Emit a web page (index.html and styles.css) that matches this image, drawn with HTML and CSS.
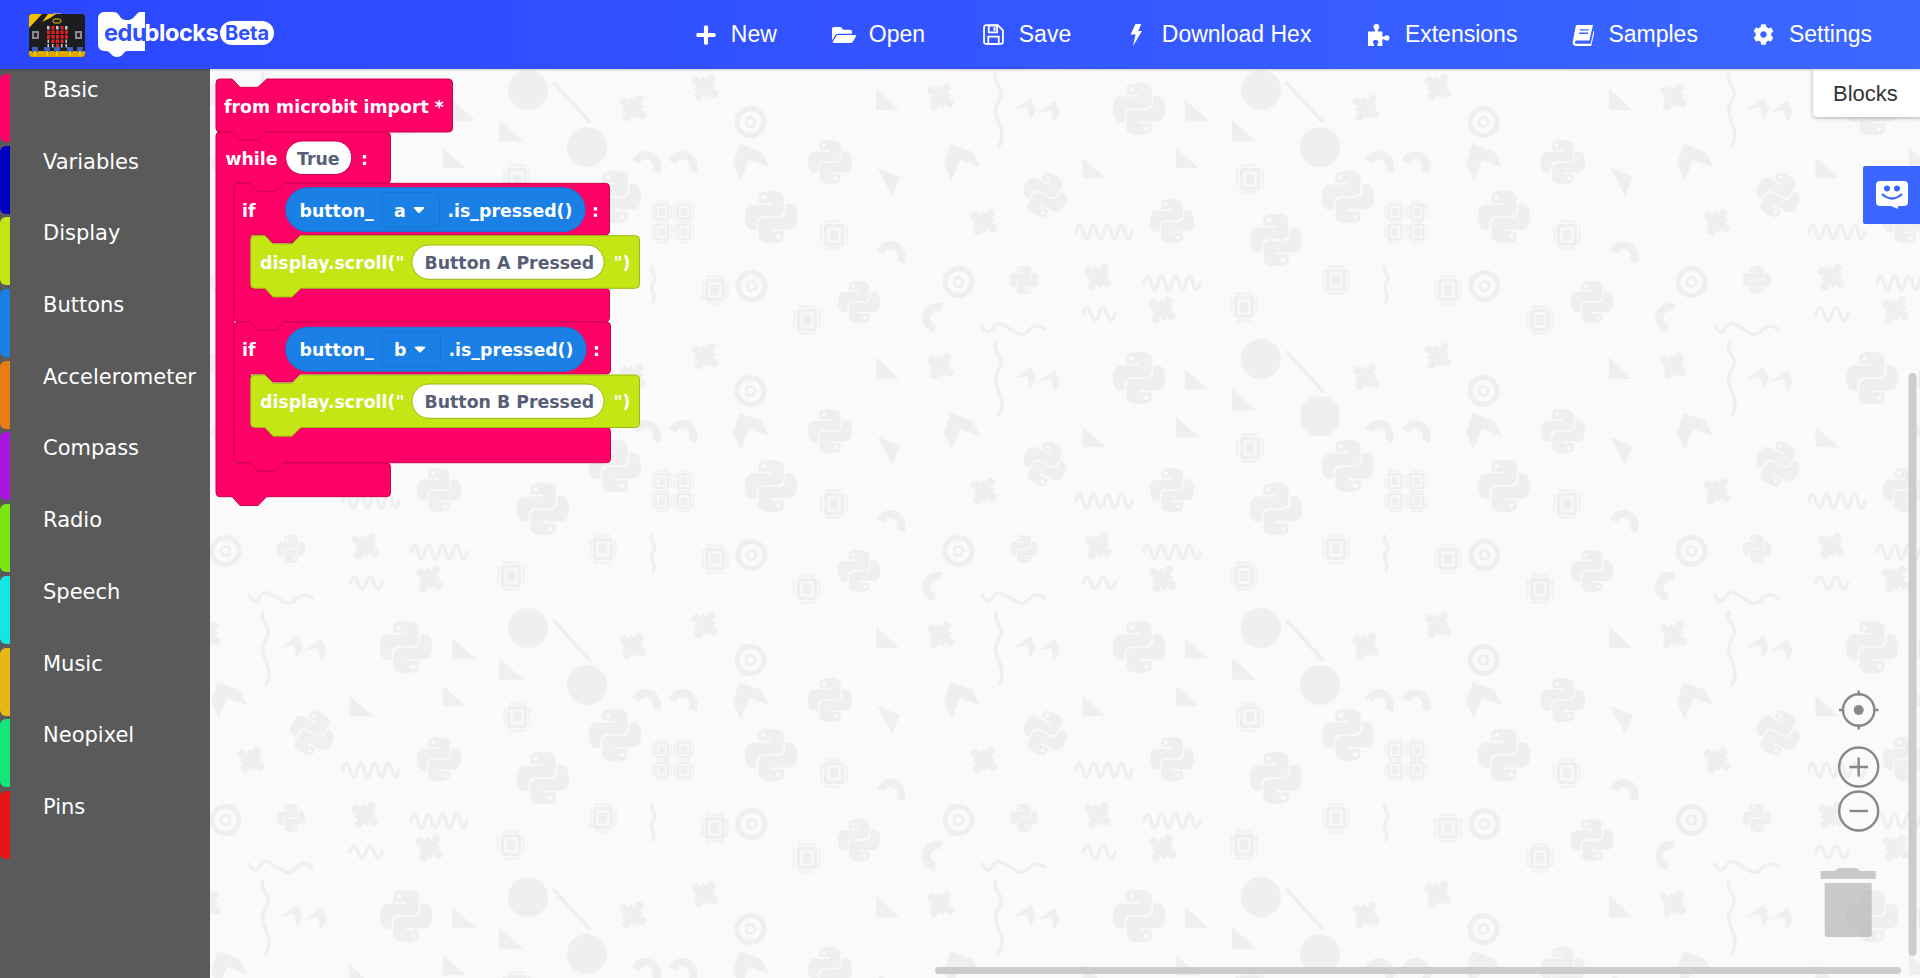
FILE: index.html
```html
<!DOCTYPE html>
<html lang="en">
<head>
<meta charset="utf-8">
<title>EduBlocks</title>
<link rel="stylesheet" href="styles.css">
</head>
<body>
<header class="topbar">
  <div class="brand">
    <svg class="board" viewBox="0 0 56 44" aria-hidden="true">
      <rect x="24" y="0" width="8" height="3" fill="#9a9a9a"/>
      <rect x="0" y="1" width="56" height="43" rx="3" fill="#1d1d1f"/>
      <path d="M0 15V4a3 3 0 0 1 3-3h10z" fill="#f2c200"/>
      <path d="M13 9l6-8h8l-6 4z" fill="#f2c200"/>
      <rect x="3" y="18" width="7" height="8" fill="#8c8c8c"/><rect x="5" y="20" width="3" height="4" fill="#222"/>
      <rect x="46" y="18" width="7" height="8" fill="#8c8c8c"/><rect x="48" y="20" width="3" height="4" fill="#222"/>
      <rect x="24" y="6" width="8" height="4" rx="2" fill="none" stroke="#f2c200" stroke-width="1"/>
      <path d="M18 13h2.500v3.500H18zM27 13h2.500v3.500H27zM36 13h2.500v3.500H36z" fill="#c9c9c9"/>
      <path d="M22.500 13h3v3.500h-3zM31.500 13h3v3.500h-3zM18 17.500h3v3.500h-3zM22.500 17.500h3v3.500h-3zM27 17.500h3v3.500h-3zM31.500 17.500h3v3.500h-3zM36 17.500h3v3.500h-3zM18 22h3v3.500h-3zM22.500 22h3v3.500h-3zM27 22h3v3.500h-3zM31.500 22h3v3.500h-3zM36 22h3v3.500h-3zM22.500 26.500h3v3.500h-3zM27 26.500h3v3.500h-3zM31.500 26.500h3v3.500h-3zM27 31h3v3.500h-3z" fill="#e02020"/>
      <path d="M18.500 26.500h1.500v3.500h-1.500zM36.500 26.500h1.500v3.500h-1.500zM18.500 31h1.500v3.500h-1.500zM23 31h1.500v3.500H23zM32 31h1.500v3.500H32zM36.500 31h1.500v3.500h-1.500z" fill="#c9c9c9"/>
      <path d="M0 38h56v3a3 3 0 0 1-3 3H3a3 3 0 0 1-3-3z" fill="#d9a900"/>
      <path d="M3 34h6v5H3zM15 34h6v5h-6zM25 34h6v5h-6zM38 34h6v5h-6zM48 34h6v5h-6z" fill="#3f5fc0"/>
      <path d="M5 38h2v5H5zM17 38h2v5h-2zM27 38h2v5h-2zM40 38h2v5h-2zM50 38h2v5h-2z" fill="#f2c200"/>
    </svg>
    <svg class="wordmark" viewBox="0 0 180 46" aria-hidden="false">
      <path d="M0 6a6 6 0 0 1 6-6h10q3 0 5 3l2 3q2 2 5 2h3q3 0 5-3l2-2q2-3 4-3h5v39H29q-2 0-4 3t-6 3q-4 0-6-3t-5-3H6a6 6 0 0 1-6-6z" fill="#fff"/>
      <text class="logo-text logo-blue" x="6" y="29">edu</text>
      <text class="logo-text logo-white" x="46.500" y="29">blocks</text>
      <rect x="122" y="9" width="54" height="24" rx="12" fill="#fff"/>
      <text class="logo-beta" x="149" y="28" text-anchor="middle">Beta</text>
    </svg>
  </div>
  <nav class="nav">
    <a class="nav-item"><svg class="ico ico-plus" viewBox="0 0 448 512"><path d="M416 208H272V64c0-17.67-14.33-32-32-32h-32c-17.67 0-32 14.33-32 32v144H32c-17.67 0-32 14.33-32 32v32c0 17.67 14.33 32 32 32h144v144c0 17.67 14.33 32 32 32h32c17.67 0 32-14.33 32-32V304h144c17.67 0 32-14.33 32-32v-32c0-17.67-14.33-32-32-32z"/></svg>New</a>
    <a class="nav-item"><svg class="ico ico-open" viewBox="0 0 576 512"><path d="M572.694 292.093L500.27 416.248A63.997 63.997 0 0 1 444.989 448H45.025c-18.523 0-30.064-20.093-20.731-36.093l72.424-124.155A64 64 0 0 1 152 256h399.964c18.523 0 30.064 20.093 20.73 36.093zM152 224h328v-48c0-26.51-21.49-48-48-48H272l-64-64H48C21.49 64 0 85.49 0 112v278.046l69.077-118.418C86.214 242.25 117.989 224 152 224z"/></svg>Open</a>
    <a class="nav-item"><svg class="ico ico-save" viewBox="0 0 20 20"><path d="M3 1h11l5 5v11a2 2 0 0 1-2 2H3a2 2 0 0 1-2-2V3a2 2 0 0 1 2-2z" fill="none" stroke="#fff" stroke-width="1.7"/><path d="M5.500 1.500h8v6.500h-8z" fill="none" stroke="#fff" stroke-width="1.7"/><path d="M5 12h10v7H5z" fill="none" stroke="#fff" stroke-width="1.7"/><rect x="10" y="3" width="2" height="3.500" fill="#fff"/></svg>Save</a>
    <a class="nav-item"><svg class="ico ico-bolt" viewBox="0 0 12 22"><path d="M5.500 0h5.800L8.200 7H12L3 22l2.600-11.600H.5z"/></svg>Download Hex</a>
    <a class="nav-item"><svg class="ico ico-puzzle" viewBox="0 0 22 22"><path d="M0 7.500h5.600c1.300 0 1.800-.9 1.200-1.800C6.200 4.800 5.400 4 5.400 2.800 5.400 1.200 6.800 0 8.400 0s3 1.200 3 2.800c0 1.200-.8 2-1.400 2.900-.6.9-.1 1.800 1.200 1.800h3.200v4c0 1.200.9 1.600 1.800 1 .9-.6 1.600-1.200 2.700-1.200 1.600 0 2.600 1.200 2.600 2.700s-1 2.700-2.600 2.700c-1.100 0-1.800-.7-2.700-1.200-.9-.6-1.800-.2-1.800 1V22h-4c-1.200 0-1.600-.9-1-1.600.5-.7 1-1.300 1-2.300 0-1.400-1.200-2.400-2.700-2.400s-2.700 1-2.700 2.400c0 1 .5 1.600 1 2.300.6.7.2 1.600-1 1.600H0z"/></svg>Extensions</a>
    <a class="nav-item"><svg class="ico ico-book" viewBox="0 0 22 22"><path d="M5 1h16l-3.600 15.500H5.600c-1.500 0-2.400.7-2.600 1.600-.2 1 .5 1.600 1.800 1.600h13.800l3-13 1 .6-3.400 14.700H4.400C1.900 22 .2 20.200 .7 18L3.600 3C3.800 1.800 4.200 1 5 1z"/><path d="M8 5.200h9l-.3 1.400h-9zM7.200 8.600h9l-.3 1.400h-9z" fill="#3a66ff"/></svg>Samples</a>
    <a class="nav-item"><svg class="ico ico-cog" viewBox="0 0 512 512"><path d="M487.400 315.700l-42.600-24.600c4.300-23.200 4.300-47 0-70.200l42.600-24.600c4.900-2.800 7.100-8.600 5.500-14-11.100-35.600-30-67.800-54.700-94.600-3.800-4.100-10-5.100-14.800-2.300L380.800 110c-17.900-15.400-38.500-27.300-60.800-35.100V25.800c0-5.600-3.900-10.500-9.400-11.700-36.700-8.200-74.300-7.800-109.200 0-5.500 1.200-9.400 6.100-9.400 11.700V75c-22.200 7.900-42.800 19.800-60.800 35.100L88.700 85.500c-4.900-2.800-11-1.900-14.800 2.300-24.700 26.700-43.600 58.900-54.700 94.600-1.700 5.400.6 11.200 5.500 14L67.300 221c-4.300 23.200-4.300 47 0 70.200l-42.600 24.600c-4.900 2.800-7.100 8.600-5.500 14 11.100 35.600 30 67.800 54.700 94.600 3.800 4.100 10 5.100 14.800 2.300l42.600-24.600c17.900 15.400 38.500 27.300 60.800 35.100v49.200c0 5.600 3.900 10.500 9.400 11.700 36.700 8.200 74.300 7.800 109.200 0 5.500-1.200 9.400-6.100 9.400-11.700v-49.200c22.200-7.900 42.800-19.800 60.800-35.100l42.600 24.600c4.900 2.800 11 1.900 14.800-2.300 24.700-26.700 43.600-58.900 54.700-94.600 1.500-5.500-.7-11.300-5.600-14.100zM256 336c-44.100 0-80-35.900-80-80s35.900-80 80-80 80 35.900 80 80-35.900 80-80 80z"/></svg>Settings</a>
  </nav>
</header>
<main class="main">
  <aside class="toolbox">
    <div class="cat"><span class="swatch c-basic"></span><span class="cat-label">Basic</span></div>
    <div class="cat"><span class="swatch c-variables"></span><span class="cat-label">Variables</span></div>
    <div class="cat"><span class="swatch c-display"></span><span class="cat-label">Display</span></div>
    <div class="cat"><span class="swatch c-buttons"></span><span class="cat-label">Buttons</span></div>
    <div class="cat"><span class="swatch c-accel"></span><span class="cat-label">Accelerometer</span></div>
    <div class="cat"><span class="swatch c-compass"></span><span class="cat-label">Compass</span></div>
    <div class="cat"><span class="swatch c-radio"></span><span class="cat-label">Radio</span></div>
    <div class="cat"><span class="swatch c-speech"></span><span class="cat-label">Speech</span></div>
    <div class="cat"><span class="swatch c-music"></span><span class="cat-label">Music</span></div>
    <div class="cat"><span class="swatch c-neopixel"></span><span class="cat-label">Neopixel</span></div>
    <div class="cat"><span class="swatch c-pins"></span><span class="cat-label">Pins</span></div>
  </aside>
  <section class="workspace">
    <svg class="canvas" viewBox="210 69 1710 909" aria-hidden="false">
      <defs>
        <path id="py" transform="translate(-12 -12)" fill-rule="evenodd" d="M14.25.18l.9.2.73.26.59.3.45.32.34.34.25.34.16.33.1.3.04.26.02.2-.01.13V8.5l-.05.63-.13.55-.21.46-.26.38-.3.31-.33.25-.35.19-.35.14-.33.1-.3.07-.26.04-.21.02H8.77l-.69.05-.59.14-.5.22-.41.27-.33.32-.27.35-.2.36-.15.37-.1.35-.07.32-.04.27-.02.21v3.06H3.17l-.21-.03-.28-.07-.32-.12-.35-.18-.36-.26-.36-.36-.35-.46-.32-.59-.28-.73-.21-.88-.14-1.05-.05-1.23.06-1.22.16-1.04.24-.87.32-.71.36-.57.4-.44.42-.33.42-.24.4-.16.36-.1.32-.05.24-.01h.16l.06.01h8.16v-.83H6.18l-.01-2.75-.02-.37.05-.34.11-.31.17-.28.25-.26.31-.23.38-.2.44-.18.51-.15.58-.12.64-.1.71-.06.77-.04.84-.02 1.27.05zm-6.3 1.98l-.23.33-.08.41.08.41.23.34.33.22.41.09.41-.09.33-.22.23-.34.08-.41-.08-.41-.23-.33-.33-.22-.41-.09-.41.09zm13.09 3.95l.28.06.32.12.35.18.36.27.36.35.35.47.32.59.28.73.21.88.14 1.04.05 1.23-.06 1.23-.16 1.04-.24.86-.32.71-.36.57-.4.45-.42.33-.42.24-.4.16-.36.09-.32.05-.24.02-.16-.01h-8.22v.82h5.84l.01 2.76.02.36-.05.34-.11.31-.17.29-.25.25-.31.24-.38.2-.44.17-.51.15-.58.13-.64.09-.71.07-.77.04-.84.01-1.27-.04-1.07-.14-.9-.2-.73-.25-.59-.3-.45-.33-.34-.34-.25-.34-.16-.33-.1-.3-.04-.25-.02-.2.01-.13v-5.34l.05-.64.13-.54.21-.46.26-.38.3-.32.33-.24.35-.2.35-.14.33-.1.3-.06.26-.04.21-.02.13-.01h5.84l.69-.05.59-.14.5-.21.41-.28.33-.32.27-.35.2-.36.15-.36.1-.35.07-.32.04-.28.02-.21V6.07h2.09l.14.01zm-6.47 14.25l-.23.33-.08.41.08.41.23.33.33.23.41.08.41-.08.33-.23.23-.33.08-.41-.08-.41-.23-.33-.33-.23-.41-.08-.41.08z"/>
        <g id="pz" transform="rotate(35)">
          <rect x="-8" y="-8" width="16" height="16" rx="1.500"/>
          <circle cx="0" cy="-11" r="4.200"/>
          <circle cx="11" cy="0" r="4.200"/>
          <circle cx="0" cy="11" r="4.200"/>
          <circle cx="-11" cy="0" r="4.200"/>
          <rect x="-1.800" y="-10" width="3.600" height="20"/>
          <rect x="-10" y="-1.800" width="20" height="3.600"/>
        </g>
        <g id="chip">
          <rect x="-10" y="-11" width="20" height="22" rx="2"/>
          <rect x="-6.500" y="-7.500" width="13" height="15" fill="#fafafa"/>
          <rect x="-4.500" y="-5.500" width="9" height="11"/>
          <path class="chip-pins" d="M-8-13.500H8M-8 13.500H8M-12.500-9V9M12.500-9V9"/>
        </g>
        <g id="target">
          <circle r="13.500" fill="none" stroke="#efefef" stroke-width="5"/>
          <circle r="4.500" fill="none" stroke="#efefef" stroke-width="3"/>
        </g>
        <path id="arc" class="pat-line thick" d="M-11 2A11 12 0 0 1 9 12"/>
        <path id="zig" class="pat-line" d="M0 0q3.500-14 7 0t7 0 7 0 7 0 7 0 7 0 7 0 7 0"/>
        <g id="tile">
          <use href="#py" transform="translate(1139 109) scale(2.170)"/>
          <use href="#py" transform="translate(830 162) scale(1.830)"/>
          <use href="#py" transform="translate(1348 197) scale(2.170)"/>
          <use href="#py" transform="translate(771 217) scale(2.170)"/>
          <use href="#py" transform="translate(1045 195) rotate(28) scale(1.830)"/>
          <use href="#py" transform="translate(1172 221) scale(1.830)"/>
          <use href="#py" transform="translate(1276 240) scale(2.170)"/>
          <use href="#py" transform="translate(859 302) scale(1.750)"/>
          <use href="#py" transform="translate(1024 280) scale(1.170)"/>
          <use href="#pz" transform="translate(705 87)"/>
          <use href="#pz" transform="translate(940.500 97)"/>
          <use href="#pz" transform="translate(1366 108)"/>
          <use href="#pz" transform="translate(984 222)"/>
          <use href="#pz" transform="translate(1098 277)"/>
          <use href="#pz" transform="translate(1162.500 310)"/>
          <use href="#chip" transform="translate(1250 179)"/>
          <use href="#chip" transform="translate(834 235)"/>
          <use href="#chip" transform="translate(715 290)"/>
          <use href="#chip" transform="translate(807 320)"/>
          <use href="#chip" transform="translate(1244 307)"/>
          <use href="#chip" transform="translate(1336 280)"/>
          <use href="#chip" transform="translate(662 212) scale(.75)"/>
          <use href="#chip" transform="translate(684 212) scale(.75)"/>
          <use href="#chip" transform="translate(662 232) scale(.75)"/>
          <use href="#chip" transform="translate(684 232) scale(.75)"/>
          <use href="#target" transform="translate(750.500 122)"/>
          <use href="#target" transform="translate(751.500 286)"/>
          <use href="#target" transform="translate(958.500 282)"/>
          <circle cx="1261" cy="90" r="20"/>
          <circle cx="1320" cy="147" r="20"/>
          <path class="pat-line" d="M1287 83l35.500 38.700"/>
          <path d="M876 88v22h23zM1185 100v20.700h23.700zM1232 120v21.700h24.500zM1176 147.700v20.600h23zM1082.500 157.700v20.600h23.500zM877.500 168l22.500 8.700-8 19.300z"/>
          <path d="M739.400 144l21.800 7.700 8.200 15.600-20.400-7.300-8.200 20.700-7.800-16.700zM950.400 144l21.800 7.700 8.200 15.600-20.400-7.300-8.200 20.700-7.800-16.700z"/>
          <path d="M1013 110l18-12.500 5 12.500-6 10-3-13zM1037 113l18-12.500 5 12.500-6 10-3-13z"/>
          <use href="#arc" transform="translate(683.600 160)"/>
          <use href="#arc" transform="translate(647 160)"/>
          <use href="#arc" transform="translate(891.600 250)"/>
          <use href="#arc" transform="translate(931 318) rotate(-100)"/>
          <path class="pat-line" d="M996 74c-5 7 8 14 5 22s-8 12-4 22 8 18 2 28"/>
          <path class="pat-line" d="M652 267c-3 4 4 8 3 12s-5 6-3 11 3 8 1 12"/>
          <use href="#zig" transform="translate(1076 232)"/>
          <use href="#zig" transform="translate(1144 283)"/>
          <path class="pat-line" d="M1083 314q4-12 8 0t8 0 8 0 8 0"/>
          <path class="pat-line" d="M982 326q5 10 10 3t9-5 9 5 9 5 9-3 9-5 8 3"/>
        </g>
      </defs>
      <rect class="paper" x="210" y="69" width="1710" height="909"/>
      <g class="pattern">
        <use href="#tile" x="-733" y="0"/><use href="#tile" x="0" y="0"/><use href="#tile" x="733" y="0"/>
        <use href="#tile" x="-733" y="269"/><use href="#tile" x="0" y="269"/><use href="#tile" x="733" y="269"/>
        <use href="#tile" x="-733" y="538"/><use href="#tile" x="0" y="538"/><use href="#tile" x="733" y="538"/>
        <use href="#tile" x="-733" y="807"/><use href="#tile" x="0" y="807"/><use href="#tile" x="733" y="807"/>
      </g>

      <!-- blocks -->
      <path class="blk pink" d="M220 79h12l8 8.300h18l8.700-8.300H448.500a4 4 0 0 1 4 4V128a4 4 0 0 1-4 4H266.700l-8.700 8.300h-18l-8-8.300H220a4 4 0 0 1-4-4V83a4 4 0 0 1 4-4z"/>
      <path class="blk pink" d="M220 132h12l8 8.300h18l8.700-8.300H386.500a4 4 0 0 1 4 4V179.300a4 4 0 0 1-4 4H284l-8.700 8.300H258l-8-8.300h-16V462.700h16l8 8.300h18l8.700-8.300H386.500a4 4 0 0 1 4 4V492.700a4 4 0 0 1-4 4H266.700L258 505.500h-18l-8-8.800H220a4 4 0 0 1-4-4V136a4 4 0 0 1 4-4z"/>
      <path class="blk pink" d="M238 183.300h12l8 8.300h18l8-8.300H605.500a4 4 0 0 1 4 4V231a4 4 0 0 1-4 4H300l-8 8h-19l-8-8h-14.300V288h14.300l8 8.300h19l8-8.300H605.500a4 4 0 0 1 4 4V317.700a4 4 0 0 1-4 4H284l-8 8.300h-18l-8-8.300H238a4 4 0 0 1-4-4V187.300a4 4 0 0 1 4-4z"/>
      <path class="blk pink" d="M238 322h12l8 8.300h18l8-8.300H606.500a4 4 0 0 1 4 4V370a4 4 0 0 1-4 4H300l-8 8h-19l-8-8h-14.300V427.500h14.300l8 8.300h19l8-8.300H606.500a4 4 0 0 1 4 4V458.700a4 4 0 0 1-4 4H284l-8 8.300h-18l-8-8.300H238a4 4 0 0 1-4-4V326a4 4 0 0 1 4-4z"/>

      <text class="bt" x="224" y="113">from microbit import *</text>
      <text class="bt" x="225.500" y="165">while</text>
      <rect class="pill-w" x="285.700" y="141" width="66" height="33.500" rx="16.700"/>
      <text class="bt dark" x="297" y="165">True</text>
      <text class="bt" x="361" y="165">:</text>

      <text class="bt" x="242" y="217">if</text>
      <rect class="pill-b" x="285.700" y="187.700" width="299.500" height="44" rx="22"/>
      <text class="bt" x="299.500" y="217">button_</text>
      <rect class="dd" x="382" y="192.500" width="57.500" height="34.500" rx="4"/>
      <text class="bt" x="394" y="217">a</text>
      <path class="arrow" d="M414 208.500q-1-1.500 1-1.500h8q2 0 1 1.500l-4 4q-1 1-2 0z"/>
      <text class="bt" x="447.500" y="217">.is_pressed()</text>
      <text class="bt" x="592" y="217">:</text>

      <path class="blk lime" d="M254.700 235.700h10.300l8 8.300h19l8.700-8.300H635.500a4 4 0 0 1 4 4V284.300a4 4 0 0 1-4 4H300.700l-8.700 8.700h-19l-8-8.700H254.700a4 4 0 0 1-4-4V239.700a4 4 0 0 1 4-4z"/>
      <text class="bt" x="260" y="268.700">display.scroll("</text>
      <rect class="pill-l" x="412" y="245" width="192" height="34.300" rx="17.100"/>
      <text class="bt dark" x="424.500" y="268.700">Button A Pressed</text>
      <text class="bt" x="613.500" y="268.700">")</text>

      <text class="bt" x="242" y="355.500">if</text>
      <rect class="pill-b" x="285.700" y="327.300" width="300.500" height="44" rx="22"/>
      <text class="bt" x="299.500" y="355.500">button_</text>
      <rect class="dd" x="382" y="332" width="58.500" height="34.500" rx="4"/>
      <text class="bt" x="394" y="355.500">b</text>
      <path class="arrow" d="M415 348q-1-1.500 1-1.500h8q2 0 1 1.500l-4 4q-1 1-2 0z"/>
      <text class="bt" x="448.500" y="355.500">.is_pressed()</text>
      <text class="bt" x="593" y="355.500">:</text>

      <path class="blk lime" d="M254.700 375h10.300l8 8.300h19l8.700-8.300H635.500a4 4 0 0 1 4 4V423.500a4 4 0 0 1-4 4H300.700l-8.700 8.700h-19l-8-8.700H254.700a4 4 0 0 1-4-4V379a4 4 0 0 1 4-4z"/>
      <text class="bt" x="260" y="408">display.scroll("</text>
      <rect class="pill-l" x="412" y="384" width="192" height="34.300" rx="17.100"/>
      <text class="bt dark" x="424.500" y="408">Button B Pressed</text>
      <text class="bt" x="613.500" y="408">")</text>

      <!-- workspace controls -->
      <g class="ctrl">
        <circle cx="1858.700" cy="710" r="15.700"/>
        <path d="M1858.700 690.500v5M1858.700 724.500v5M1839 710h5M1873.500 710h5"/>
        <circle class="ctrl-dot" cx="1858.700" cy="710" r="5"/>
        <circle cx="1858.700" cy="767" r="19.500"/>
        <path d="M1849.500 767h18.500M1858.700 757.500v19"/>
        <circle cx="1858.700" cy="811" r="19.500"/>
        <path d="M1849.500 811h18.500"/>
      </g>
      <g class="trash">
        <path d="M1820.700 871h55v8h-55z"/>
        <path d="M1835 871q2-3 5-3h15q3 0 5 3z"/>
        <path d="M1824.700 883h47v51a3 3 0 0 1-3 3h-41a3 3 0 0 1-3-3z"/>
      </g>
      <rect class="bar" x="1908.500" y="373" width="8" height="583" rx="4"/>
      <rect class="bar" x="935" y="967" width="966" height="7" rx="3.500"/>
    </svg>
    <div class="tab">Blocks</div>
    <button class="chat" type="button" aria-label="Feedback">
      <svg class="chat-ico" viewBox="0 0 32 28"><path d="M4 0h24a4 4 0 0 1 4 4v17a4 4 0 0 1-4 4h-6v3l-7-3H4a4 4 0 0 1-4-4V4a4 4 0 0 1 4-4z" fill="#fff"/><circle cx="11" cy="7.500" r="3" fill="#3a66ff"/><circle cx="21" cy="7.500" r="3" fill="#3a66ff"/><path d="M6 13q10 9 20 0" fill="none" stroke="#3a66ff" stroke-width="2.200"/></svg>
    </button>
  </section>
</main>
</body>
</html>
```

FILE: styles.css
```css
* { box-sizing: border-box; }
html, body { height: 100%; }
body {
  margin: 0;
  overflow: hidden;
  display: flex;
  flex-direction: column;
  font-family: "Liberation Sans", Arial, sans-serif;
  background: #fafafa;
}
.topbar {
  height: 69px;
  flex: none;
  display: flex;
  align-items: center;
  justify-content: space-between;
  padding: 0 48px 0 29px;
  background: linear-gradient(90deg, #2b47ff 0%, #3355ff 50%, #3b68ff 100%);
  box-shadow: 0 1px 2px rgba(0, 0, 0, .2);
  position: relative;
  z-index: 2;
}
.brand { display: flex; align-items: center; gap: 14px; }
.board { width: 56px; height: 44px; display: block; margin-top: 1px; }
.wordmark { width: 180px; height: 46px; display: block; margin-left: -1px; }
.logo-text { font: 700 23.500px Inter, "Liberation Sans", sans-serif; letter-spacing: -.4px; }
.logo-blue { fill: #2f50ff; }
.logo-white { fill: #fff; }
.logo-beta { font: 700 20px Inter, "Liberation Sans", sans-serif; fill: #2f50ff; }
.nav { display: flex; align-items: center; gap: 55px; }
.nav-item { display: flex; align-items: center; color: #fff; font-size: 23px; line-height: 1; }
.ico { display: block; fill: #fff; margin-right: 15px; }
.ico-plus { width: 20px; height: 22px; }
.ico-open { width: 24px; height: 22px; margin-right: 13px; }
.ico-save { width: 21px; height: 21px; margin: 0 15px 0 2.700px; }
.ico-bolt { width: 12px; height: 22px; margin: 0 20px 0 3.600px; }
.ico-puzzle { width: 22px; height: 22px; margin-left: 1.500px; }
.ico-book { width: 22px; height: 22px; margin-right: 14px; }
.ico-cog { width: 21px; height: 21px; margin-right: 15px; }

.main { flex: 1; min-height: 0; display: flex; }
.toolbox {
  width: 210px;
  flex: none;
  background: #5a5a5a;
  padding-top: 5px;
  display: flex;
  flex-direction: column;
  gap: 3.700px;
}
.cat { height: 68px; display: flex; align-items: flex-start; color: #fff; }
.swatch { width: 10px; height: 68px; border-radius: 6px 0 0 6px; flex: none; }
.cat-label {
  margin-left: 33px;
  font: 21px/33px "DejaVu Sans", sans-serif;
}
.c-basic { background: #ff0066; }
.c-variables { background: #0000c4; }
.c-display { background: #c4e614; }
.c-buttons { background: #1a80e6; }
.c-accel { background: #e67e14; }
.c-compass { background: #a814e0; }
.c-radio { background: #7ce614; }
.c-speech { background: #14e6e6; }
.c-music { background: #e6b814; }
.c-neopixel { background: #14e67a; }
.c-pins { background: #e61414; }

.workspace { flex: 1; min-width: 0; position: relative; overflow: hidden; }
.canvas { position: absolute; inset: 0; width: 100%; height: 100%; display: block; }
.paper { fill: #fafafa; }
.pattern { fill: #efefef; }
.pat-line { fill: none; stroke: #efefef; stroke-width: 3.500; stroke-linecap: round; stroke-linejoin: round; }
.pat-line.thick { stroke-width: 8; stroke-linecap: butt; }
.chip-pins { fill: none; stroke: #efefef; stroke-width: 3; stroke-dasharray: 1.500 1; }

.blk { stroke-width: 1; }
.pink { fill: #ff0066; stroke: #cc0052; }
.lime { fill: #c4e614; stroke: #9db812; }
.bt { font: 700 17.350px "DejaVu Sans", sans-serif; fill: #fff; }
.bt.dark { fill: #575e75; }
.pill-w { fill: #fff; stroke: #cc0052; stroke-width: 1; }
.pill-l { fill: #fff; stroke: #9db812; stroke-width: 1; }
.pill-b { fill: #1a80e6; stroke: #1a73cf; stroke-width: 1; }
.dd { fill: #1a80e6; stroke: #1875d8; stroke-width: 1; }
.arrow { fill: #fff; }
.ctrl { fill: none; stroke: #888; stroke-width: 2.400; }
.ctrl-dot { fill: #888; stroke: none; }
.trash { fill: #aaa; opacity: .6; }
.bar { fill: #ccc; }

.tab {
  position: absolute;
  top: 0;
  right: 0;
  width: 107px;
  height: 48px;
  padding: 12px 0 0 20px;
  background: #fff;
  color: #333;
  font-size: 22px;
  line-height: 26px;
  border-radius: 0 0 0 4px;
  box-shadow: 0 1px 4px rgba(0, 0, 0, .3);
}
.chat {
  position: absolute;
  top: 97px;
  right: 0;
  width: 57px;
  height: 58px;
  padding: 0;
  border: 0;
  border-radius: 2px 0 0 2px;
  background: #3a66ff;
  display: flex;
  align-items: center;
  justify-content: center;
}
.chat-ico { width: 32px; height: 28px; display: block; }
```
